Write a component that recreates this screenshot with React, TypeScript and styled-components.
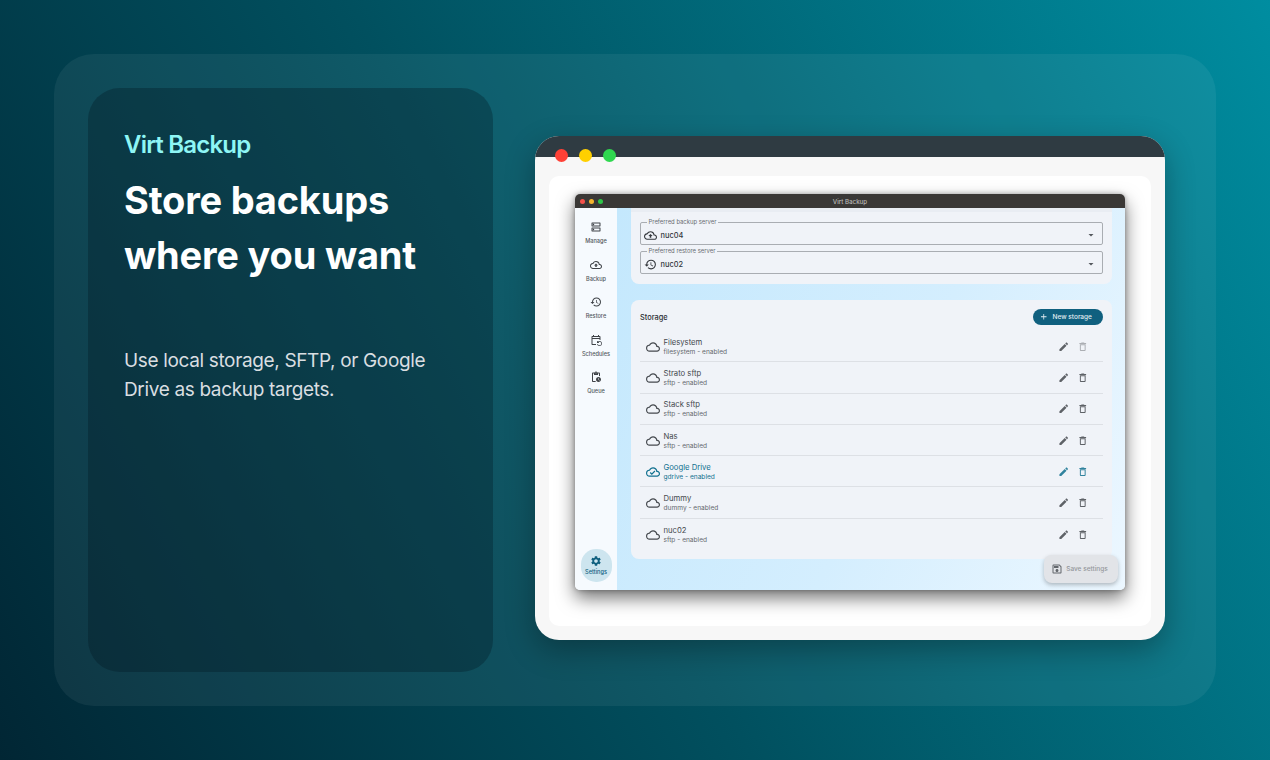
import React from "react";
import styled, { createGlobalStyle } from "styled-components";
import {
  MdAdd,
  MdArrowDropDown,
  MdEdit,
  MdOutlineBackup,
  MdOutlineCloud,
  MdOutlineCloudDone,
  MdOutlineDelete,
  MdOutlineDns,
  MdOutlineEventRepeat,
  MdOutlinePendingActions,
  MdOutlineSave,
  MdRestore,
  MdSettings
} from "react-icons/md";

const GlobalStyle = createGlobalStyle`
  html, body {
    margin: 0;
    padding: 0;
  }
  * {
    box-sizing: border-box;
  }
  body {
    font-family: Inter, "Liberation Sans", sans-serif;
  }
`;

const Page = styled.div`
  width: 1270px;
  height: 760px;
  padding: 54px;
  overflow: hidden;
  background: linear-gradient(62deg, #012634 0%, #01505f 45%, #008da0 100%);
`;
const Panel = styled.div`
  height: 652px;
  padding: 34px;
  display: flex;
  gap: 42px;
  align-items: stretch;
  border-radius: 40px;
  background: rgba(255, 255, 255, 0.06);
`;
const Intro = styled.section`
  width: 405px;
  padding: 42px 36px;
  border-radius: 32px;
  background: rgba(0, 20, 30, 0.3);
`;
const Brand = styled.div`
  font-size: 24px;
  line-height: 29px;
  font-weight: 600;
  letter-spacing: -0.8px;
  color: #8ef6f5;
`;
const Heading = styled.h1`
  margin: 14px 0 0;
  font-size: 38px;
  line-height: 55px;
  font-weight: 700;
  letter-spacing: -0.2px;
  color: #fff;
`;
const Lead = styled.p`
  margin: 63px 0 0;
  font-size: 19px;
  line-height: 29px;
  letter-spacing: -0.35px;
  color: #d9dee1;
`;
const Browser = styled.section`
  width: 630px;
  height: 504px;
  margin-top: 48px;
  display: flex;
  flex-direction: column;
  border-radius: 24px;
  overflow: hidden;
  background: #f7f7f7;
  box-shadow: 0 10px 30px rgba(0, 0, 0, 0.3);
`;
const BrowserBar = styled.div`
  height: 21px;
  flex: none;
  padding: 13px 0 0 20px;
  display: flex;
  gap: 11px;
  background: #2f3b42;
`;
const BrowserDot = styled.span<{ $color: string }>`
  width: 13px;
  height: 13px;
  flex: none;
  position: relative;
  z-index: 1;
  border-radius: 50%;
  background: ${p => p.$color};
`;
const Sheet = styled.div`
  width: 602px;
  height: 450px;
  margin: 19px 14px 0;
  padding: 18px 26px 0;
  border-radius: 10px;
  background: #fff;
`;
const AppWindow = styled.div`
  position: relative;
  height: 396px;
  display: flex;
  flex-direction: column;
  border-radius: 5px;
  overflow: hidden;
  box-shadow: 0 8px 18px rgba(0, 0, 0, 0.55), 0 0 5px rgba(0, 0, 0, 0.3);
`;
const AppBar = styled.div`
  position: relative;
  height: 14px;
  flex: none;
  padding-left: 4.5px;
  display: flex;
  align-items: center;
  gap: 4px;
  background: #3a3836;
`;
const AppDot = styled.span<{ $color: string }>`
  width: 5px;
  height: 5px;
  border-radius: 50%;
  background: ${p => p.$color};
`;
const AppTitle = styled.div`
  position: absolute;
  left: 0;
  right: 0;
  text-align: center;
  font-size: 6.2px;
  font-weight: 500;
  color: #b9b8b6;
`;
const AppBody = styled.div`
  flex: 1;
  min-height: 0;
  display: flex;
`;
const Sidebar = styled.nav`
  width: 42px;
  flex: none;
  padding: 13px 0 8px;
  display: flex;
  flex-direction: column;
  align-items: center;
  background: #f6fafe;
  box-shadow: 1px 0 0 #e3eef5;
`;
const NavItem = styled.div<{ $active?: boolean }>`
  width: 31px;
  height: 37.6px;
  flex: none;
  display: flex;
  flex-direction: column;
  align-items: center;
  gap: 5px;
  font-size: 5.6px;
  font-weight: 500;
  line-height: 7px;
  color: ${p => (p.$active ? "#10607f" : "#53585d")};
  svg {
    font-size: 12px;
    color: #3f4348;
  }
  ${p =>
    p.$active &&
    `
    height: 33px;
    margin-top: auto;
    justify-content: center;
    gap: 2px;
    border-radius: 15px;
    background: #cde5ef;
    svg { color: #10607f; }
  `}
`;
const Content = styled.main`
  flex: 1;
  min-width: 0;
  padding: 0 13px 0 14px;
  display: flex;
  flex-direction: column;
  gap: 16px;
  background: linear-gradient(115deg, #c4e8fd 0%, #d4eefe 55%, #ecf7ff 100%);
`;
const Card = styled.section`
  border-radius: 8px;
  background: #f0f3f8;
  padding: 0 9px;
`;
const ServerCard = styled(Card)`
  height: 76px;
  padding-top: 12px;
  display: flex;
  flex-direction: column;
  gap: 4px;
  border-radius: 0 0 8px 8px;
  background: linear-gradient(#e9edf3 0, #e9edf3 4px, #f0f3f8 4px);
`;
const Field = styled.fieldset`
  height: 25px;
  margin: 0;
  padding: 4.5px 3px 0 2.5px;
  display: flex;
  align-items: center;
  border: 0.7px solid #a9adb2;
  border-radius: 2px;
  color: #33373c;
  font-size: 7.4px;
  font-weight: 500;
  svg {
    font-size: 13px;
    flex: none;
  }
`;
const FieldLabel = styled.legend`
  margin-left: 3px;
  padding: 0 2px;
  font-size: 5.9px;
  line-height: 4px;
  font-weight: 400;
  color: #696d72;
`;
const FieldValue = styled.span`
  flex: 1;
  margin-left: 4px;
`;
const FieldArrow = styled.span`
  display: flex;
  margin-right: 2px;
  color: #53575c;
  svg {
    font-size: 12px;
  }
`;
const StorageCard = styled(Card)`
  height: 259px;
  padding-top: 9px;
`;
const StorageHead = styled.header`
  height: 16px;
  display: flex;
  align-items: center;
  justify-content: space-between;
  margin-bottom: 6px;
`;
const StorageTitle = styled.h2`
  margin: 0;
  font-size: 7.4px;
  font-weight: 500;
  color: #2a2e33;
`;
const NewButton = styled.button`
  width: 70px;
  height: 16px;
  padding: 0 5px 0 0;
  display: flex;
  align-items: center;
  justify-content: center;
  gap: 4px;
  border: 0;
  border-radius: 8px;
  background: #10607f;
  color: #e4eef3;
  font-family: inherit;
  font-size: 6.5px;
  font-weight: 500;
  svg {
    font-size: 9.5px;
  }
`;
const Row = styled.div<{ $selected?: boolean }>`
  height: 31.3px;
  padding: 1px 15px 0 6px;
  display: flex;
  align-items: center;
  border-bottom: 1px solid #dde0e5;
  color: ${p => (p.$selected ? "#10708f" : "#45494e")};
  &:last-child {
    border-bottom: 0;
  }
`;
const RowIcon = styled.span`
  display: flex;
  margin-right: 3.5px;
  svg {
    font-size: 14px;
  }
`;
const RowText = styled.div`
  flex: 1;
  min-width: 0;
  margin-top: 2px;
`;
const RowName = styled.div`
  font-size: 7.7px;
  line-height: 10px;
  font-weight: 400;
`;
const RowMeta = styled.div<{ $selected?: boolean }>`
  font-size: 6.6px;
  line-height: 9.5px;
  color: ${p => (p.$selected ? "#10708f" : "#64686d")};
`;
const RowAction = styled.span<{ $muted?: boolean }>`
  display: flex;
  margin-left: 7px;
  opacity: ${p => (p.$muted ? 0.4 : 0.85)};
  svg {
    font-size: 11.5px;
  }
`;
const SaveButton = styled.button`
  position: absolute;
  right: 7px;
  bottom: 7px;
  width: 74px;
  height: 28px;
  padding: 0 3px 0 0;
  display: flex;
  align-items: center;
  justify-content: center;
  gap: 3px;
  border: 0;
  border-radius: 8px;
  background: #e2e4e8;
  color: #94979b;
  font-family: inherit;
  font-size: 6.5px;
  font-weight: 500;
  box-shadow: 0 2px 4px rgba(0, 0, 0, 0.25);
  svg {
    font-size: 12px;
    color: #63676c;
  }
`;

const storages = [
  { name: "Filesystem", meta: "filesystem - enabled", locked: true },
  { name: "Strato sftp", meta: "sftp - enabled" },
  { name: "Stack sftp", meta: "sftp - enabled" },
  { name: "Nas", meta: "sftp - enabled" },
  { name: "Google Drive", meta: "gdrive - enabled", selected: true },
  { name: "Dummy", meta: "dummy - enabled" },
  { name: "nuc02", meta: "sftp - enabled" }
];

function App() {
  return (
    <Page>
      <GlobalStyle />
      <Panel>
        <Intro>
          <Brand>Virt Backup</Brand>
          <Heading>
            Store backups
            <br />
            where you want
          </Heading>
          <Lead>
            Use local storage, SFTP, or Google
            <br />
            Drive as backup targets.
          </Lead>
        </Intro>
        <Browser>
          <BrowserBar>
            <BrowserDot $color="#ff4136" />
            <BrowserDot $color="#ffd000" />
            <BrowserDot $color="#2fd84f" />
          </BrowserBar>
          <Sheet>
            <AppWindow>
              <AppBar>
                <AppDot $color="#f5524b" />
                <AppDot $color="#f5b52e" />
                <AppDot $color="#2fc548" />
                <AppTitle>Virt Backup</AppTitle>
              </AppBar>
              <AppBody>
                <Sidebar>
                  <NavItem>
                    <MdOutlineDns />
                    Manage
                  </NavItem>
                  <NavItem>
                    <MdOutlineBackup />
                    Backup
                  </NavItem>
                  <NavItem>
                    <MdRestore />
                    Restore
                  </NavItem>
                  <NavItem>
                    <MdOutlineEventRepeat />
                    Schedules
                  </NavItem>
                  <NavItem>
                    <MdOutlinePendingActions />
                    Queue
                  </NavItem>
                  <NavItem $active>
                    <MdSettings />
                    Settings
                  </NavItem>
                </Sidebar>
                <Content>
                  <ServerCard>
                    <Field>
                      <FieldLabel>Preferred backup server</FieldLabel>
                      <MdOutlineBackup />
                      <FieldValue>nuc04</FieldValue>
                      <FieldArrow>
                        <MdArrowDropDown />
                      </FieldArrow>
                    </Field>
                    <Field>
                      <FieldLabel>Preferred restore server</FieldLabel>
                      <MdRestore />
                      <FieldValue>nuc02</FieldValue>
                      <FieldArrow>
                        <MdArrowDropDown />
                      </FieldArrow>
                    </Field>
                  </ServerCard>
                  <StorageCard>
                    <StorageHead>
                      <StorageTitle>Storage</StorageTitle>
                      <NewButton>
                        <MdAdd />
                        New storage
                      </NewButton>
                    </StorageHead>
                    {storages.map(item => (
                      <Row key={item.name} $selected={item.selected}>
                        <RowIcon>
                          {item.selected ? <MdOutlineCloudDone /> : <MdOutlineCloud />}
                        </RowIcon>
                        <RowText>
                          <RowName>{item.name}</RowName>
                          <RowMeta $selected={item.selected}>{item.meta}</RowMeta>
                        </RowText>
                        <RowAction>
                          <MdEdit />
                        </RowAction>
                        <RowAction $muted={item.locked}>
                          <MdOutlineDelete />
                        </RowAction>
                      </Row>
                    ))}
                  </StorageCard>
                </Content>
              </AppBody>
              <SaveButton>
                <MdOutlineSave />
                Save settings
              </SaveButton>
            </AppWindow>
          </Sheet>
        </Browser>
      </Panel>
    </Page>
  );
}

export default App;
